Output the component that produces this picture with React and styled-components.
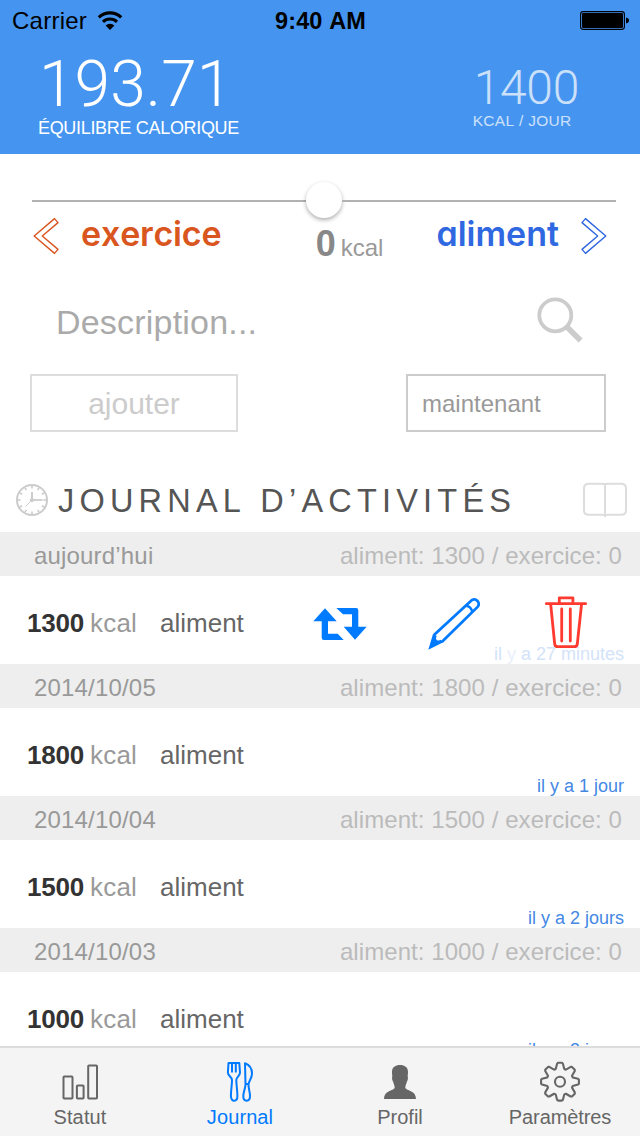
import React from "react";
import styled, { createGlobalStyle } from "styled-components";

const GlobalStyle = createGlobalStyle`
  *, *::before, *::after { box-sizing: border-box; }
  body { margin: 0; background: #fff; }
  svg { display: block; flex: none; fill: none; }
`;

const Screen = styled.div`
  width: 640px;
  height: 1136px;
  display: flex;
  flex-direction: column;
  overflow: hidden;
  background: #fff;
  color: #333;
  font-family: "Liberation Sans", Arial, sans-serif;
  font-kerning: none;
  white-space: nowrap;
`;

/* ---------- header ---------- */

const Header = styled.header`
  height: 154px;
  flex: none;
  background: #4595f0;
  color: #fff;
`;

const StatusBar = styled.div`
  height: 41px;
  padding: 0 11px 0 12px;
  display: grid;
  grid-template-columns: 1fr auto 1fr;
  align-items: center;
  color: #000;
  font-size: 24px;
`;

const Carrier = styled.div`
  display: flex;
  align-items: center;
  gap: 10px;
  letter-spacing: 0.25px;
`;

const Clock = styled.div`
  padding-top: 2px;
  font-weight: bold;
  font-size: 23.5px;
  letter-spacing: 0.1px;
`;

const BatterySlot = styled.div`
  display: flex;
  justify-content: flex-end;
`;

const Summary = styled.div`
  display: flex;
  justify-content: space-between;
  padding: 12px 61px 0 38px;
`;

const Figure = styled.div`
  padding-top: ${(p) => (p.$small ? 10 : 0)}px;
  opacity: ${(p) => (p.$small ? 0.72 : 1)};
`;

const FigureValue = styled.div`
  font-family: Roboto, "Liberation Sans", sans-serif;
  font-weight: 300;
  font-size: ${(p) => (p.$small ? 48 : 64)}px;
  line-height: ${(p) => (p.$small ? 50 : 64)}px;
  letter-spacing: ${(p) => (p.$small ? -0.3 : 0.1)}px;
  padding-left: 1px;
`;

const FigureLabel = styled.div`
  margin-top: ${(p) => (p.$small ? -3 : 0)}px;
  font-size: ${(p) => (p.$small ? 15.5 : 18)}px;
  line-height: 22px;
  letter-spacing: ${(p) => (p.$small ? 0.3 : -0.32)}px;
`;

/* ---------- entry form ---------- */

const Form = styled.section`
  height: 314px;
  flex: none;
  padding-top: 28px;
`;

const Slider = styled.div`
  display: flex;
  align-items: center;
  height: 36px;
  margin: 0 24px 0 32px;
`;

const SliderLine = styled.div`
  flex: 1;
  height: 2px;
  margin-top: 2px;
  background: #b2b2b2;
`;

const Thumb = styled.div`
  width: 36px;
  height: 36px;
  border-radius: 50%;
  background: #fff;
  box-shadow: 0 2px 4px rgba(0, 0, 0, 0.32);
`;

const Directions = styled.div`
  display: grid;
  grid-template-columns: 1fr auto 1fr;
  height: 60px;
  margin-top: -1px;
  padding: 0 33px;
`;

const Direction = styled.div`
  display: flex;
  align-items: flex-start;
  justify-content: ${(p) => (p.$end ? "flex-end" : "flex-start")};
  gap: 20px;
  color: ${(p) => p.$color};
  font-family: Inter, sans-serif;
  font-feature-settings: "cv11";
  font-weight: 600;
  font-size: 34px;
  line-height: 33px;
  letter-spacing: ${(p) => p.$tracking}px;
`;

const Amount = styled.div`
  display: flex;
  align-items: baseline;
  gap: 5px;
  padding-left: 59px;
  line-height: 53px;
  color: #999;
  font-size: 24px;
`;

const AmountValue = styled.b`
  font-size: 36px;
  color: #888;
`;

const SearchRow = styled.div`
  display: flex;
  justify-content: space-between;
  align-items: flex-start;
  height: 60px;
  margin-top: 15px;
  padding: 4px 56px 0 56px;
  color: #aaa;
  font-size: 34px;
  line-height: 52px;
  letter-spacing: 0.2px;
`;

const ButtonRow = styled.div`
  display: flex;
  justify-content: space-between;
  margin-top: 22px;
  padding: 0 34px 0 30px;
`;

const Box = styled.div`
  width: ${(p) => p.$width}px;
  height: 58px;
  padding: 0 14px;
  border: 2px solid ${(p) => p.$border};
  color: ${(p) => p.$color};
  font-size: ${(p) => p.$size}px;
  line-height: 56px;
  text-align: ${(p) => p.$align};
`;

/* ---------- journal ---------- */

const TitleBar = styled.div`
  display: flex;
  align-items: center;
  height: 64px;
  flex: none;
  padding: 0 12px 0 15px;
`;

const Title = styled.h1`
  flex: 1;
  margin: 0 0 0 9px;
  padding-top: 3px;
  color: #555;
  font-size: 32.5px;
  font-weight: normal;
  letter-spacing: 5.2px;
`;

const List = styled.div`
  flex: 1;
  min-height: 0;
  overflow: hidden;
`;

const DayHeader = styled.div`
  display: flex;
  justify-content: space-between;
  height: 44px;
  padding: 0 18px 0 34px;
  background: #eee;
  color: #999;
  font-size: 24px;
  line-height: 48px;
  letter-spacing: 0.18px;
`;

const Totals = styled.span`
  color: #bbb;
  letter-spacing: 0.07px;
`;

const Entry = styled.div`
  position: relative;
  display: flex;
  align-items: center;
  height: 88px;
  padding-left: 27px;
  font-size: 26px;
`;

const EntryText = styled.div`
  display: flex;
  width: 285px;
  padding-top: 6px;
`;

const Calories = styled.b`
  width: 63px;
  color: #333;
  letter-spacing: -0.25px;
`;

const Unit = styled.span`
  width: 70px;
  color: #999;
  letter-spacing: 0.2px;
`;

const Kind = styled.span`
  color: #666;
`;

const Actions = styled.div`
  display: flex;
  gap: 60px;
`;

const Ago = styled.div`
  position: absolute;
  right: 16px;
  bottom: 0;
  font-size: 18px;
  line-height: 20px;
  color: ${(p) => (p.$faded ? "#d3e3f9" : "#4488e4")};
`;

const Ghost = styled.span`
  opacity: 0.5;
`;

/* ---------- tab bar ---------- */

const TabBar = styled.nav`
  display: grid;
  grid-template-columns: repeat(4, 1fr);
  height: 90px;
  flex: none;
  border-top: 2px solid #dcdcdc;
  background: #f4f4f4;
`;

const Tab = styled.div`
  display: flex;
  flex-direction: column;
  align-items: center;
  padding-top: 10px;
  color: ${(p) => (p.$active ? "#007aff" : "#666")};
  font-size: 20px;
  line-height: 22px;
  letter-spacing: ${(p) => p.$tracking || 0}px;
`;

/* ---------- icons ---------- */

const WifiIcon = () => (
  <svg width="26" height="20" viewBox="0 0 26 20">
    <path d="M1.8 6.4a16 16 0 0 1 22.4 0" stroke="#000" strokeWidth="3.1" />
    <path d="M6 10.9a10 10 0 0 1 14 0" stroke="#000" strokeWidth="3" />
    <path d="M13 19l-4.4-4.4a6.3 6.3 0 0 1 8.8 0z" fill="#000" />
  </svg>
);

const BatteryIcon = () => (
  <svg width="49" height="20" viewBox="0 0 49 20">
    <rect x="0.6" y="0.6" width="43.8" height="17.8" rx="2.6" stroke="#000" strokeWidth="1.1" />
    <rect x="2" y="2" width="41" height="15" rx="1.2" fill="#000" />
    <path d="M46 6.5c4 .5 4 5.5 0 6z" fill="#000" />
  </svg>
);

const ChevronIcon = ({ flip }) => (
  <svg width="28" height="38" viewBox="0 0 28 38">
    <path
      d="M1.2 19L21.5 1.6L25 5.6L9.3 19L25 32.4L21.5 36.4Z"
      transform={flip ? "translate(28 0) scale(-1 1)" : undefined}
      stroke="currentColor"
      strokeWidth="1.4"
      strokeLinejoin="round"
    />
  </svg>
);

const SearchIcon = () => (
  <svg width="48" height="48" viewBox="0 0 48 48">
    <circle cx="19.3" cy="19.3" r="16" stroke="#ccc" strokeWidth="3.8" />
    <path d="M30.5 30.5L44.6 44.6" stroke="#ccc" strokeWidth="5.6" />
  </svg>
);

const ClockIcon = () => (
  <svg width="34" height="34" viewBox="0 0 34 34" stroke="#ccc">
    <circle cx="17" cy="17" r="15" strokeWidth="2" />
    {[...Array(12)].map((_, i) => (
      <path key={i} d="M17 3v2.6" strokeWidth="1.6" transform={`rotate(${i * 30} 17 17)`} />
    ))}
    <path d="M17 9V17" strokeWidth="2" />
    <path d="M17 17H27.5" strokeWidth="1.8" />
    <path d="M17 17L10.5 23.5" strokeWidth="1" />
    <circle cx="17" cy="17" r="1.6" fill="#ccc" />
  </svg>
);

const BookIcon = () => (
  <svg width="45" height="36" viewBox="0 0 45 36" stroke="#ddd" strokeWidth="2">
    <path d="M22 2.6C21.500 2 20.500 1.700 19 1.700H6C3 1.700 1 3.500 1 6.200V28.200c0 3 2 4.500 5 4.500H19c1.800 0 3 .3 3 .8c0-.5 1-.8 3-.8H38c3 0 5-1.500 5-4.500V6.200c0-2.700-2-4.500-5-4.500H25C23.500 1.700 22.500 2 22 2.600z" />
    <path d="M22 2V35" />
  </svg>
);

const RepeatIcon = () => (
  <svg width="56" height="64" viewBox="0 0 56 64">
    <path
      fill="#007aff"
      d="M13 20.300L24.700 33.300H16V45.700H25.700L31.700 52H12Q9.700 52 9.700 49.700V33.300H1.300Z M24.300 20H44Q46.300 20 46.300 22.300V38.700H54.700L43 51.700L31.700 38.700H40V26.300H31Z"
    />
  </svg>
);

const PencilIcon = () => (
  <svg width="56" height="64" viewBox="0 0 56 64">
    <g transform="translate(-1.700 -0.500)">
      <path
        d="M7.700 47.500L44.800 13.200c4-3.700 10.200 2 6.500 6.200L15.500 54.500"
        stroke="#007aff"
        strokeWidth="2.800"
      />
      <path d="M39.800 18.200c3 .5 5.500 3 6 6" stroke="#007aff" strokeWidth="2.400" />
      <path d="M2 62.200L6.700 46.500L10.500 48.500C8.500 51.500 11 54.500 14.500 52.300L16.500 55Z" fill="#007aff" />
    </g>
  </svg>
);

const TrashIcon = () => (
  <svg width="44" height="64" viewBox="0 0 44 64" stroke="#ff3b30" strokeLinecap="round" strokeLinejoin="round">
    <path d="M2.300 15.700H41.700" strokeWidth="2.700" />
    <path d="M15.300 15V9.800H28.900V15" strokeWidth="2.800" />
    <path d="M6.700 16.500L10.700 56Q11 58.700 13.500 58.700H30.500Q33 58.700 33.300 56L37.500 16.500" strokeWidth="2.800" />
    <path d="M17.700 21V53M26.300 21V53" strokeWidth="2.800" />
  </svg>
);

const BarsIcon = () => (
  <svg width="48" height="48" viewBox="0 0 48 48" stroke="currentColor" strokeWidth="2">
    <rect x="7.500" y="18.600" width="9" height="22" rx="0.800" />
    <rect x="20.900" y="27.500" width="6.700" height="13.100" rx="0.800" />
    <rect x="32.200" y="7.500" width="8.800" height="33.100" rx="0.800" />
  </svg>
);

const CutleryIcon = () => (
  <svg width="48" height="48" viewBox="0 0 48 48" stroke="currentColor" strokeWidth="2" strokeLinejoin="round">
    <path d="M12.500 5H23.300L24 14.500C24 18 20.300 19 20.300 22C20.300 27 21.400 32 21.400 38C21.400 44.300 14.900 44.300 14.900 38C14.900 32 16 27 16 22C16 19 11.900 18 11.900 14.500Z" />
    <path d="M16 5.500V14.500M19.800 5.500V14.500" />
    <path d="M29 5.200C34 7 36 11 36 15.500C36 20 33 22.500 32.500 26.500C32.500 31 34 34 34 38C34 44.300 27.300 44.300 27.300 38C27.300 34 29.500 30 29.500 26.500Z" />
    <path d="M29.500 26H32.500" />
  </svg>
);

const PersonIcon = () => (
  <svg width="48" height="48" viewBox="0 0 48 48">
    <path
      fill="currentColor"
      d="M24 7C28.500 7 32 9 32 14C32 16 31.700 17 31.700 18.500C32.200 19.500 32 22 31 23.500C30.500 25.500 29.300 27 29.300 30C31 33 40 32.500 40 41H8C8 32.500 17 33 18.700 30C18.700 27 17.500 25.500 17 23.500C16 22 15.800 19.500 16.300 18.500C16.300 17 16 16 16 14C16 9 19.500 7 24 7Z"
    />
  </svg>
);

// Eight-toothed outline built from one tooth rotated around the centre.
const gearPath = (() => {
  const cx = 24;
  const cy = 23.7;
  const points = [];
  for (let i = 0; i < 8; i++) {
    const angle = (i * Math.PI) / 4;
    [[-4.3, 12.7], [-2.9, 18], [-2, 18.9], [2, 18.9], [2.9, 18], [4.3, 12.7]].forEach(([t, r]) => {
      const x = cx + r * Math.sin(angle) + t * Math.cos(angle);
      const y = cy - r * Math.cos(angle) + t * Math.sin(angle);
      points.push(`${x.toFixed(2)} ${y.toFixed(2)}`);
    });
  }
  return `M${points.join("L")}Z`;
})();

const GearIcon = () => (
  <svg width="48" height="48" viewBox="0 0 48 48" stroke="currentColor" strokeWidth="2.1" strokeLinejoin="round">
    <path d={gearPath} />
    <circle cx="24" cy="23.7" r="5" />
  </svg>
);

/* ---------- data ---------- */

const days = [
  { date: "aujourd’hui", kcal: 1300, active: true },
  { date: "2014/10/05", kcal: 1800, ago: "il y a 1 jour" },
  { date: "2014/10/04", kcal: 1500, ago: "il y a 2 jours" },
  { date: "2014/10/03", kcal: 1000, ago: "il y a 3 jours" },
];

const Day = ({ date, kcal, ago, active }) => (
  <section>
    <DayHeader>
      <span>{date}</span>
      <Totals>aliment: {kcal} / exercice: 0</Totals>
    </DayHeader>
    <Entry>
      <EntryText>
        <Calories>{kcal}</Calories>
        <Unit>kcal</Unit>
        <Kind>aliment</Kind>
      </EntryText>
      {active && (
        <Actions>
          <RepeatIcon />
          <PencilIcon />
          <TrashIcon />
        </Actions>
      )}
      <Ago $faded={active}>
        {active ? <>il <Ghost>y</Ghost> a 27 minutes</> : ago}
      </Ago>
    </Entry>
  </section>
);

export default function App() {
  return (
    <Screen>
      <GlobalStyle />
      <Header>
        <StatusBar>
          <Carrier>Carrier <WifiIcon /></Carrier>
          <Clock>9:40 AM</Clock>
          <BatterySlot><BatteryIcon /></BatterySlot>
        </StatusBar>
        <Summary>
          <Figure>
            <FigureValue>193.71</FigureValue>
            <FigureLabel>ÉQUILIBRE CALORIQUE</FigureLabel>
          </Figure>
          <Figure $small>
            <FigureValue $small>1400</FigureValue>
            <FigureLabel $small>KCAL / JOUR</FigureLabel>
          </Figure>
        </Summary>
      </Header>

      <Form>
        <Slider>
          <SliderLine />
          <Thumb />
          <SliderLine />
        </Slider>
        <Directions>
          <Direction $color="#d9561f" $tracking={-0.15}>
            <ChevronIcon />
            <span>exercice</span>
          </Direction>
          <Amount>
            <AmountValue>0</AmountValue>
            <span>kcal</span>
          </Amount>
          <Direction $end $color="#2f68e0" $tracking={0}>
            <span>aliment</span>
            <ChevronIcon flip />
          </Direction>
        </Directions>
        <SearchRow>
          <span>Description...</span>
          <SearchIcon />
        </SearchRow>
        <ButtonRow>
          <Box $width={208} $border="#ddd" $color="#ccc" $size={30} $align="center">ajouter</Box>
          <Box $width={200} $border="#ccc" $color="#999" $size={24} $align="left">maintenant</Box>
        </ButtonRow>
      </Form>

      <TitleBar>
        <ClockIcon />
        <Title>JOURNAL D’ACTIVITÉS</Title>
        <BookIcon />
      </TitleBar>

      <List>
        {days.map((day) => <Day key={day.date} {...day} />)}
      </List>

      <TabBar>
        <Tab $tracking={0.15}><BarsIcon />Statut</Tab>
        <Tab $active $tracking={0.1}><CutleryIcon />Journal</Tab>
        <Tab><PersonIcon />Profil</Tab>
        <Tab $tracking={-0.1}><GearIcon />Paramètres</Tab>
      </TabBar>
    </Screen>
  );
}
